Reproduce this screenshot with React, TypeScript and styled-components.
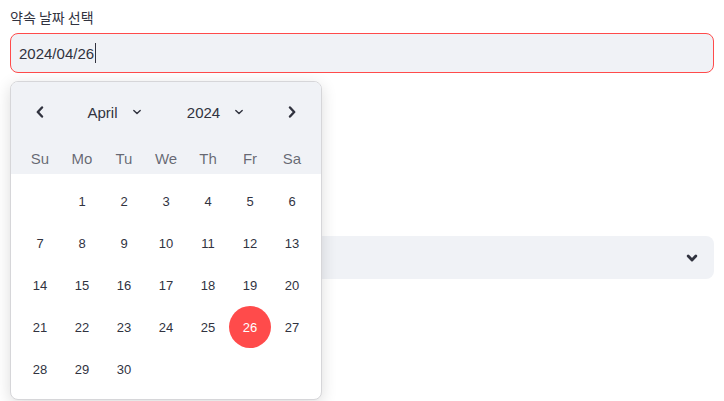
import React from 'react';
import styled, { createGlobalStyle } from 'styled-components';

const GlobalStyle = createGlobalStyle`
  html, body {
    margin: 0;
    padding: 0;
    background: #ffffff;
  }
  body {
    font-family: "Liberation Sans", "Noto Sans CJK KR", sans-serif;
    color: rgb(49, 51, 63);
  }
`;

const Page = styled.div`
  padding: 7px 10px 0 10px;
  width: 724px;
  min-height: 401px;
  box-sizing: border-box;
`;

const Field = styled.div<{ $offset?: number }>`
  display: flex;
  flex-direction: column;
  margin-top: ${(p) => p.$offset || 0}px;
`;

const Label = styled.label`
  font-family: "Noto Sans CJK KR", "Liberation Sans", sans-serif;
  font-size: 14px;
  line-height: 21px;
  height: 21px;
  margin-bottom: 5px;
  color: rgb(49, 51, 63);
`;

const InputWrap = styled.div`
  position: relative;
`;

const InputBox = styled.div<{ $focused?: boolean }>`
  height: 40px;
  box-sizing: border-box;
  border: 1px solid ${(p) => (p.$focused ? '#ff4b4b' : '#f0f2f6')};
  border-radius: 8px;
  background: #f0f2f6;
  display: flex;
  align-items: center;
  padding: 0 8px;
  font-size: 15px;
  color: rgb(49, 51, 63);
`;

const Caret = styled.span`
  display: inline-block;
  width: 1px;
  height: 20px;
  margin-left: 1px;
  background: rgb(49, 51, 63);
`;

const Popover = styled.div`
  position: absolute;
  top: calc(100% + 8px);
  left: 0;
  z-index: 10;
  width: 312px;
  box-sizing: border-box;
  border: 1px solid #d6d6d9;
  border-radius: 8px;
  background: #ffffff;
  box-shadow: 0 4px 16px rgba(0, 0, 0, 0.14);
  overflow: hidden;
`;

const CalHeader = styled.div`
  background: #f0f2f6;
  padding: 0 8px;
`;

const NavRow = styled.div`
  height: 60px;
  display: flex;
  align-items: center;
`;

const NavButton = styled.div`
  width: 42px;
  height: 42px;
  display: flex;
  align-items: center;
  justify-content: center;
  color: rgb(49, 51, 63);
`;

const PickerGroup = styled.div<{ $shift?: number }>`
  flex: 1;
  display: flex;
  align-items: center;
  justify-content: center;
  gap: 14px;
  font-size: 15px;
  color: rgb(49, 51, 63);
  margin-left: ${(p) => p.$shift || 0}px;
`;

const Grid = styled.div`
  display: grid;
  grid-template-columns: repeat(7, 42px);
`;

const WeekDay = styled.div`
  height: 32px;
  display: flex;
  align-items: center;
  justify-content: center;
  font-size: 15px;
  color: rgba(49, 51, 63, 0.72);
`;

const CalBody = styled.div`
  padding: 6px 8px 9px 8px;
`;

const DayCell = styled.div<{ $selected?: boolean }>`
  height: 42px;
  display: flex;
  align-items: center;
  justify-content: center;
  font-size: 13px;
  border-radius: 50%;
  background: ${(p) => (p.$selected ? '#ff4b4b' : 'transparent')};
  color: ${(p) => (p.$selected ? '#ffffff' : 'rgb(49, 51, 63)')};
`;

const SelectBox = styled.div`
  height: 43px;
  box-sizing: border-box;
  border-radius: 8px;
  background: #f0f2f6;
  display: flex;
  align-items: center;
  justify-content: flex-end;
  padding-right: 16px;
  color: rgb(49, 51, 63);
`;

const ChevronSide = ({ dir }: { dir: 'left' | 'right' }) => (
  <svg width="10" height="12" viewBox="0 0 10 12">
    <path
      d={dir === 'left' ? 'M7 1.5 L2.8 6 L7 10.5' : 'M3 1.5 L7.2 6 L3 10.5'}
      fill="none"
      stroke="currentColor"
      strokeWidth="2.4"
      strokeLinecap="round"
      strokeLinejoin="round"
    />
  </svg>
);

const ChevronDown = ({ size = 8, weight = 1.4 }: { size?: number; weight?: number }) => (
  <svg width={size + 2} height={size} viewBox="0 0 10 8">
    <path
      d="M1.8 2.4 L5 5.6 L8.2 2.4"
      fill="none"
      stroke="currentColor"
      strokeWidth={weight}
      strokeLinecap="round"
      strokeLinejoin="round"
    />
  </svg>
);

const weekDays = ['Su', 'Mo', 'Tu', 'We', 'Th', 'Fr', 'Sa'];

// April 2024 starts on Monday
const days: (number | null)[] = [null, ...Array.from({ length: 30 }, (_, i) => i + 1)];

const App: React.FC = () => {
  const selected = 26;

  return (
    <>
      <GlobalStyle />
      <Page>
        <Field>
          <Label>약속 날짜 선택</Label>
          <InputWrap>
            <InputBox $focused>
              2024/04/26
              <Caret />
            </InputBox>
            <Popover>
              <CalHeader>
                <NavRow>
                  <NavButton>
                    <ChevronSide dir="left" />
                  </NavButton>
                  <PickerGroup $shift={-2}>
                    <span>April</span>
                    <ChevronDown />
                  </PickerGroup>
                  <PickerGroup $shift={-10}>
                    <span>2024</span>
                    <ChevronDown />
                  </PickerGroup>
                  <NavButton>
                    <ChevronSide dir="right" />
                  </NavButton>
                </NavRow>
                <Grid>
                  {weekDays.map((d) => (
                    <WeekDay key={d}>{d}</WeekDay>
                  ))}
                </Grid>
              </CalHeader>
              <CalBody>
                <Grid>
                  {days.map((d, i) => (
                    <DayCell key={i} $selected={d === selected}>
                      {d ?? ''}
                    </DayCell>
                  ))}
                </Grid>
              </CalBody>
            </Popover>
          </InputWrap>
        </Field>
        <Field $offset={137}>
          <Label>시간 선택</Label>
          <SelectBox>
            <ChevronDown size={10} weight={2.4} />
          </SelectBox>
        </Field>
      </Page>
    </>
  );
};

export default App;
